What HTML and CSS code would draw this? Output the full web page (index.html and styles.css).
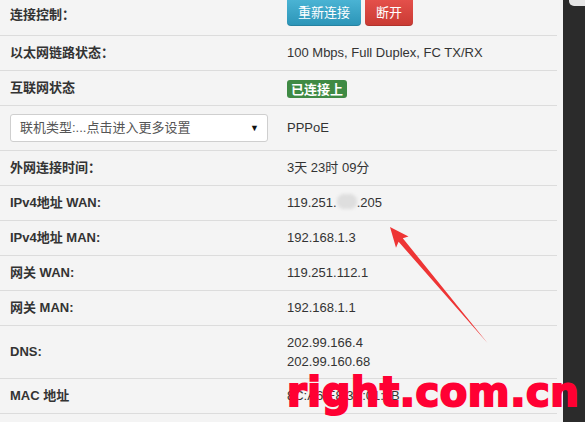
FILE: index.html
```html
<!DOCTYPE html>
<html lang="zh-CN">
<head>
<meta charset="utf-8">
<title>WAN 状态</title>
<link rel="stylesheet" href="styles.css">
</head>
<body>
<div class="page">
  <div class="main">
    <div class="table">
      <div class="row row-first">
        <div class="label">连接控制：</div>
        <div class="value actions">
          <button class="btn btn-info">重新连接</button>
          <button class="btn btn-danger">断开</button>
        </div>
      </div>
      <div class="row">
        <div class="label">以太网链路状态：</div>
        <div class="value">100 Mbps, Full Duplex, FC TX/RX</div>
      </div>
      <div class="row">
        <div class="label">互联网状态</div>
        <div class="value"><span class="badge">已连接上</span></div>
      </div>
      <div class="row row-select">
        <div class="label">
          <div class="select"><span>联机类型:...点击进入更多设置</span><span class="caret">▼</span></div>
        </div>
        <div class="value">PPPoE</div>
      </div>
      <div class="row">
        <div class="label">外网连接时间：</div>
        <div class="value">3天 23时 09分</div>
      </div>
      <div class="row">
        <div class="label">IPv4地址 WAN:</div>
        <div class="value">119.251.<span class="blur"></span>.205</div>
      </div>
      <div class="row">
        <div class="label">IPv4地址 MAN:</div>
        <div class="value">192.168.1.3</div>
      </div>
      <div class="row">
        <div class="label">网关 WAN:</div>
        <div class="value">119.251.112.1</div>
      </div>
      <div class="row">
        <div class="label">网关 MAN:</div>
        <div class="value">192.168.1.1</div>
      </div>
      <div class="row row-dns">
        <div class="label">DNS:</div>
        <div class="value lines"><div>202.99.166.4</div><div>202.99.160.68</div></div>
      </div>
      <div class="row">
        <div class="label">MAC 地址</div>
        <div class="value">8C:A6:E8:3B:01:3B</div>
      </div>
    </div>
  </div>
  <div class="sidebar"><div class="thumb"></div></div>

  <svg class="arrow" width="585" height="422" viewBox="0 0 585 422" aria-hidden="true">
    <polygon points="390,227 408.5,236.5 402.8,238.2 487.5,343 398.6,241.8 396,247.8" fill="#ee3535"/>
  </svg>
  <div class="watermark">right.com.cn</div>
</div>
</body>
</html>
```
FILE: styles.css
```css
html, body {
  margin: 0;
  padding: 0;
}
body {
  background: #f4f4f4;
  font-family: "Liberation Sans", Arial, "Noto Sans CJK SC", sans-serif;
  font-size: 13px;
  color: #333;
  overflow: hidden;
}
.page {
  position: relative;
  display: flex;
  width: 585px;
  height: 422px;
  overflow: hidden;
}
.main {
  width: 563px;
  flex: none;
}
.table {
  width: 557px;
  margin-top: -5px;
}
.row {
  display: grid;
  grid-template-columns: 287px 1fr;
  align-items: center;
  height: 34px;
  border-bottom: 1px solid #dcdcdc;
}
.row-first { height: 40px; }
.row-select { height: 44px; }
.row-dns { height: 52px; }
.label {
  padding-left: 10px;
  font-weight: bold;
  line-height: 20px;
}
.value {
  line-height: 20px;
}
.lines {
  line-height: 19px;
}
.actions {
  display: flex;
  gap: 4px;
  align-self: start;
  margin-top: 1px;
}
.btn {
  font-family: "Noto Sans CJK SC", sans-serif;
  font-size: 13px;
  line-height: 20px;
  color: #fff;
  border: 0;
  border-radius: 4px;
  padding: 6px 11px 4px;
  height: 30px;
  cursor: pointer;
}
.btn-info {
  background: linear-gradient(#4fb8d8, #2b94b7);
  box-shadow: inset 0 -1px 0 rgba(0,0,0,0.12);
}
.btn-danger {
  background: linear-gradient(#e8534e, #c93a33);
  box-shadow: inset 0 -1px 0 rgba(0,0,0,0.12);
}
.badge {
  display: inline-block;
  background: #3f8a44;
  color: #fff;
  font-weight: bold;
  font-family: "Noto Sans CJK SC", sans-serif;
  font-size: 13px;
  line-height: 18px;
  height: 18px;
  padding: 0 4px;
  border-radius: 3px;
  margin-top: 2px;
  vertical-align: middle;
}
.select {
  display: flex;
  justify-content: space-between;
  align-items: center;
  width: 258px;
  height: 28px;
  box-sizing: border-box;
  padding: 0 8px 0 9px;
  background: #fff;
  border: 1px solid #cfcfcf;
  border-radius: 3px;
  font-weight: normal;
  color: #555;
}
.caret {
  font-size: 9px;
  color: #111;
}
.blur {
  display: inline-block;
  width: 20px;
  height: 15px;
  vertical-align: -2px;
  background: #dedede;
  border-radius: 7px;
  filter: blur(1.5px);
}
.sidebar {
  width: 22px;
  flex: none;
  background: #2b2b2b;
  display: flex;
  justify-content: flex-end;
  align-items: flex-start;
}
.thumb {
  width: 16px;
  height: 6px;
  background: #e6e6e6;
  border-bottom-left-radius: 5px;
}
.arrow {
  position: absolute;
  left: 0;
  top: 0;
  pointer-events: none;
}
.watermark {
  position: absolute;
  left: 287px;
  top: 369px;
  font-family: "DejaVu Sans", sans-serif;
  font-weight: bold;
  font-size: 40px;
  line-height: 46px;
  letter-spacing: 0.6px;
  color: #ff0033;
  -webkit-text-stroke: 2px #ff0033;
  white-space: nowrap;
}
```
